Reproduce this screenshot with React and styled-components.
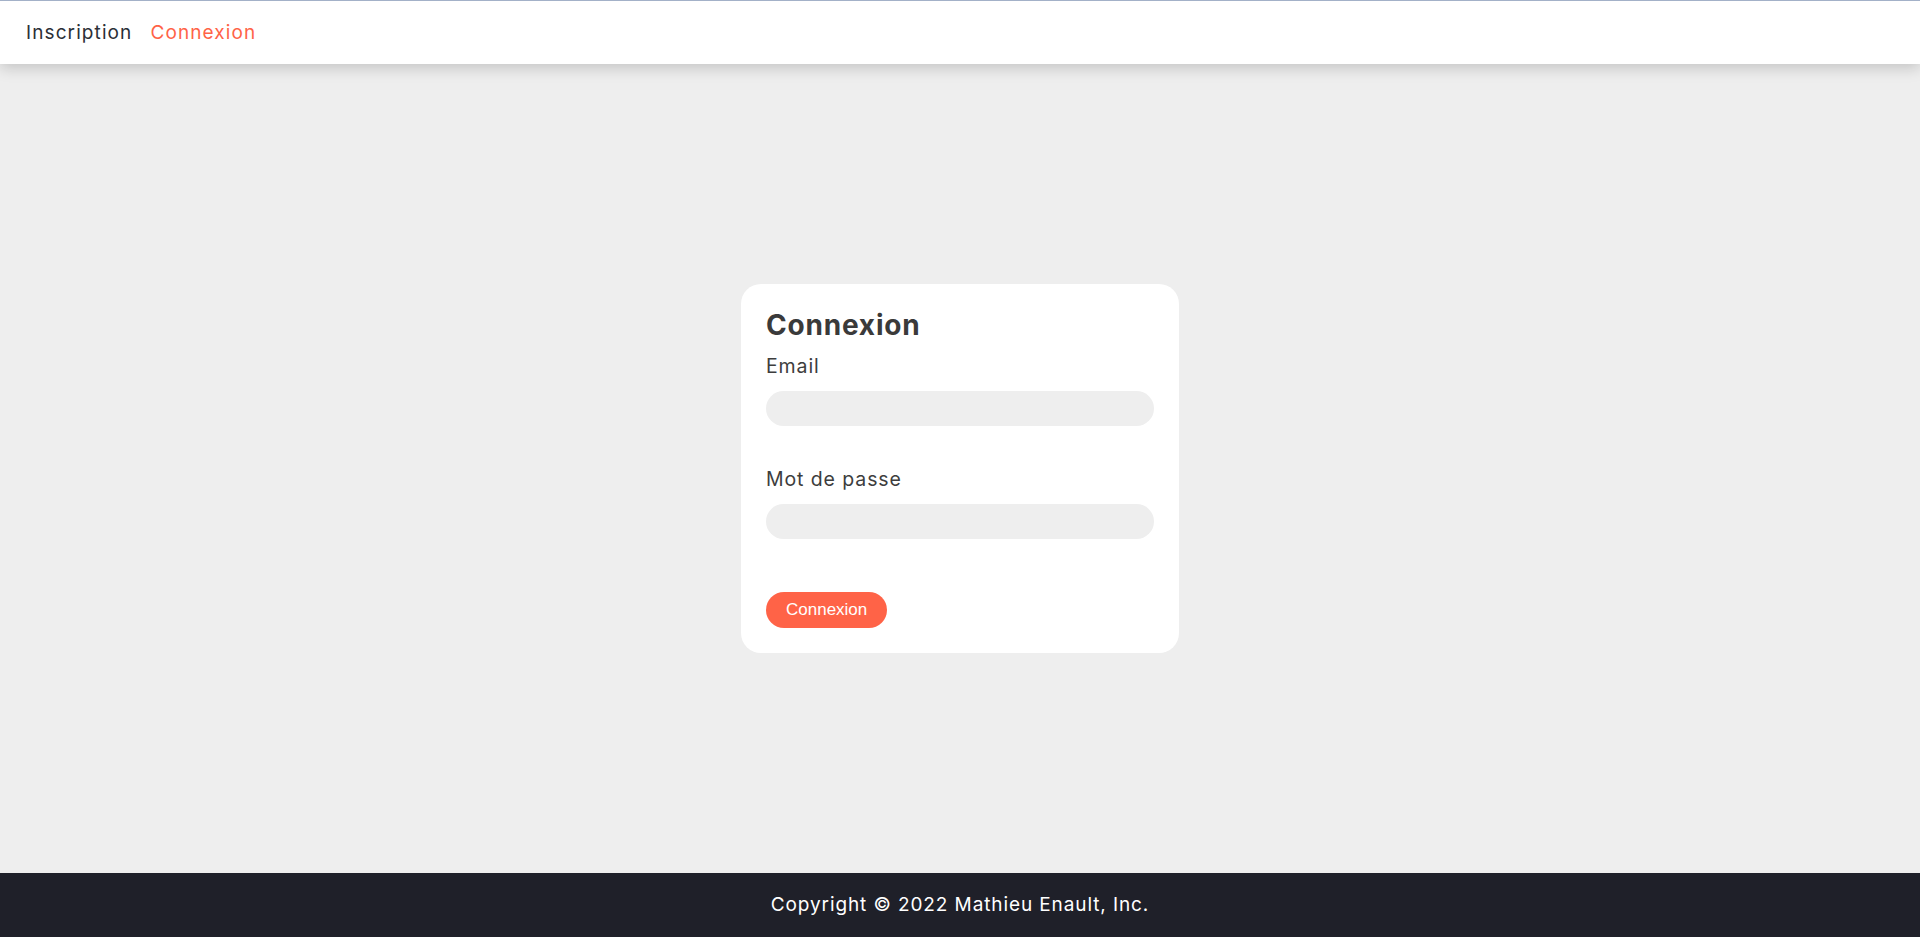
import React from "react";
import styled, { createGlobalStyle } from "styled-components";

const GlobalStyle = createGlobalStyle`
  html, body {
    margin: 0;
    padding: 0;
    background: #eeeeee;
    font-family: Inter, "Open Sans", sans-serif;
    color: #333333;
  }
  * {
    box-sizing: border-box;
  }
`;

const Page = styled.div`
  min-height: 100vh;
  display: flex;
  flex-direction: column;
`;

const Navbar = styled.nav`
  height: 64px;
  background: #ffffff;
  border-top: 1px solid #a3b1c8;
  box-shadow: 0 4px 14px rgba(0, 0, 0, 0.18);
  display: flex;
  align-items: center;
  gap: 18px;
  padding: 0 0 0 26px;
  position: relative;
  z-index: 1;
`;

const NavLink = styled.a`
  font-size: 19px;
  letter-spacing: 1.1px;
  color: ${({ active }) => (active ? "#ff6347" : "#2b2f36")};
  text-decoration: none;
  cursor: pointer;
`;

const Main = styled.main`
  flex: 1;
  display: flex;
  align-items: center;
  justify-content: center;
`;

const Card = styled.form`
  width: 438px;
  padding: 25px;
  background: #ffffff;
  border-radius: 20px;
  display: flex;
  flex-direction: column;
`;

const Title = styled.h1`
  margin: 0 0 12px;
  font-size: 28px;
  line-height: 1.2;
  font-weight: 700;
  letter-spacing: 0.8px;
  color: #3a3a3a;
`;

const Label = styled.label`
  display: block;
  font-size: 19.5px;
  line-height: 24px;
  letter-spacing: 0.9px;
  color: #3d3d3d;
  margin-bottom: 13px;
`;

const Input = styled.input`
  display: block;
  width: 100%;
  height: 35px;
  border: none;
  outline: none;
  border-radius: 18px;
  background: #eeeeee;
  padding: 0 16px;
  font-family: inherit;
  font-size: 16px;
  margin-bottom: ${({ last }) => (last ? "53px" : "41px")};
`;

const Button = styled.button`
  align-self: flex-start;
  height: 36px;
  padding: 0 20px;
  border: none;
  border-radius: 18px;
  background: #ff6347;
  color: #ffffff;
  font-family: "Liberation Sans", Arial, sans-serif;
  font-size: 17px;
  cursor: pointer;
`;

const Footer = styled.footer`
  height: 64px;
  background: #1f2029;
  color: #ffffff;
  display: flex;
  align-items: center;
  justify-content: center;
  font-size: 19px;
  letter-spacing: 0.9px;
  padding-bottom: 2px;
`;

export default function App() {
  return (
    <Page>
      <GlobalStyle />
      <Navbar>
        <NavLink>Inscription</NavLink>
        <NavLink active>Connexion</NavLink>
      </Navbar>
      <Main>
        <Card onSubmit={(e) => e.preventDefault()}>
          <Title>Connexion</Title>
          <Label htmlFor="email">Email</Label>
          <Input id="email" type="email" />
          <Label htmlFor="password">Mot de passe</Label>
          <Input id="password" type="password" last />
          <Button type="submit">Connexion</Button>
        </Card>
      </Main>
      <Footer>Copyright © 2022 Mathieu Enault, Inc.</Footer>
    </Page>
  );
}
